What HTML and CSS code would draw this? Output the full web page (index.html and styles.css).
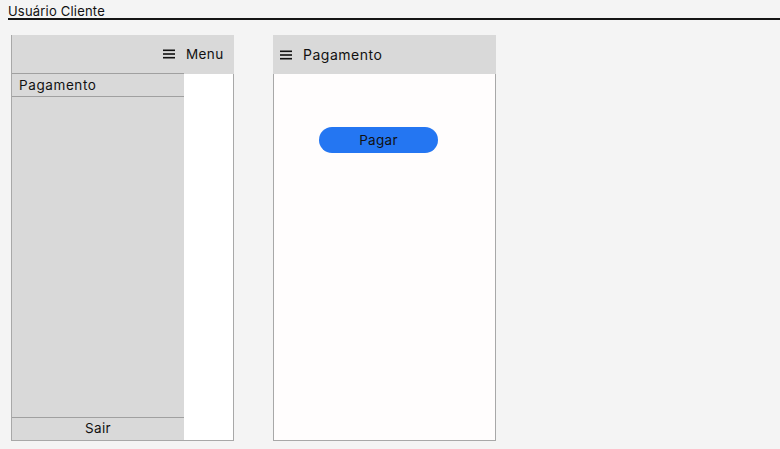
FILE: index.html
```html
<!DOCTYPE html>
<html lang="pt">
<head>
<meta charset="utf-8">
<link rel="stylesheet" href="styles.css">
</head>
<body>
<div class="title">Usuário Cliente</div>
<div class="screens">
  <div class="phone menu-phone">
    <div class="drawer">
      <div class="drawer-head">
        <svg class="burger" width="12" height="10" viewBox="0 0 12 10"><rect x="0" y="0.5" width="12" height="1.6" fill="#111"/><rect x="0" y="4.2" width="12" height="1.6" fill="#111"/><rect x="0" y="7.9" width="12" height="1.6" fill="#111"/></svg>
      </div>
      <div class="drawer-item">Pagamento</div>
      <div class="drawer-fill"></div>
      <div class="drawer-foot">Sair</div>
    </div>
    <div class="side">
      <div class="side-head">Menu</div>
      <div class="side-body"></div>
    </div>
  </div>
  <div class="phone pay-phone">
    <div class="pay-head">
      <svg class="burger" width="12" height="10" viewBox="0 0 12 10"><rect x="0" y="0.5" width="12" height="1.6" fill="#111"/><rect x="0" y="4.2" width="12" height="1.6" fill="#111"/><rect x="0" y="7.9" width="12" height="1.6" fill="#111"/></svg>
      <span class="pay-title">Pagamento</span>
    </div>
    <div class="pay-body">
      <button class="pay-btn">Pagar</button>
    </div>
  </div>
</div>
</body>
</html>
```

FILE: styles.css
```css
* { box-sizing: border-box; }
html, body { margin: 0; padding: 0; }
body {
  background: #f4f4f4;
  width: 780px;
  height: 449px;
  font-family: "Inter", "Open Sans", sans-serif;
  color: #111;
  overflow: hidden;
}
.title {
  margin-left: 8px;
  padding-top: 5px;
  height: 20px;
  font-size: 13px;
  line-height: 13px;
  letter-spacing: 0.2px;
  border-bottom: 2px solid #151515;
}
.screens {
  display: flex;
  gap: 39px;
  padding-left: 11px;
  margin-top: 15px;
}
.phone {
  width: 223px;
  height: 406px;
  display: flex;
}
.drawer {
  width: 173px;
  background: #d9d9d9;
  border-left: 1px solid #a8a8a8;
  border-bottom: 1px solid #a8a8a8;
  display: flex;
  flex-direction: column;
}
.drawer-head {
  height: 39px;
  border-bottom: 1px solid #a0a0a0;
  display: flex;
  align-items: center;
  justify-content: flex-end;
  padding-right: 9px;
}
.drawer-item {
  height: 23px;
  border-bottom: 1px solid #a0a0a0;
  font-size: 13.5px;
  line-height: 22px;
  letter-spacing: 0.6px;
  padding-left: 7px;
}
.drawer-fill { flex: 1; }
.drawer-foot {
  height: 23px;
  border-top: 1px solid #a0a0a0;
  font-size: 13.5px;
  line-height: 21px;
  letter-spacing: 0.4px;
  text-align: center;
}
.side {
  width: 50px;
  display: flex;
  flex-direction: column;
}
.side-head {
  height: 39px;
  background: #d9d9d9;
  font-size: 13.5px;
  line-height: 39px;
  letter-spacing: 0.4px;
  padding-left: 2px;
}
.side-body {
  flex: 1;
  background: #fff;
  border-right: 1px solid #a8a8a8;
  border-bottom: 1px solid #a8a8a8;
}
.pay-phone { flex-direction: column; }
.pay-head {
  height: 39px;
  background: #d9d9d9;
  display: flex;
  align-items: center;
  padding-left: 7px;
  gap: 11px;
}
.pay-title { font-size: 14px; letter-spacing: 0.5px; }
.pay-body {
  flex: 1;
  background: #fffdfd;
  border: 1px solid #a8a8a8;
  border-top: none;
  padding-top: 53px;
  padding-left: 45px;
}
.pay-btn {
  width: 119px;
  height: 26px;
  border: none;
  border-radius: 13px;
  background: #2476f2;
  color: #111;
  font-family: inherit;
  font-size: 13.5px;
  letter-spacing: 0.3px;
  padding: 0;
  display: block;
}
```
